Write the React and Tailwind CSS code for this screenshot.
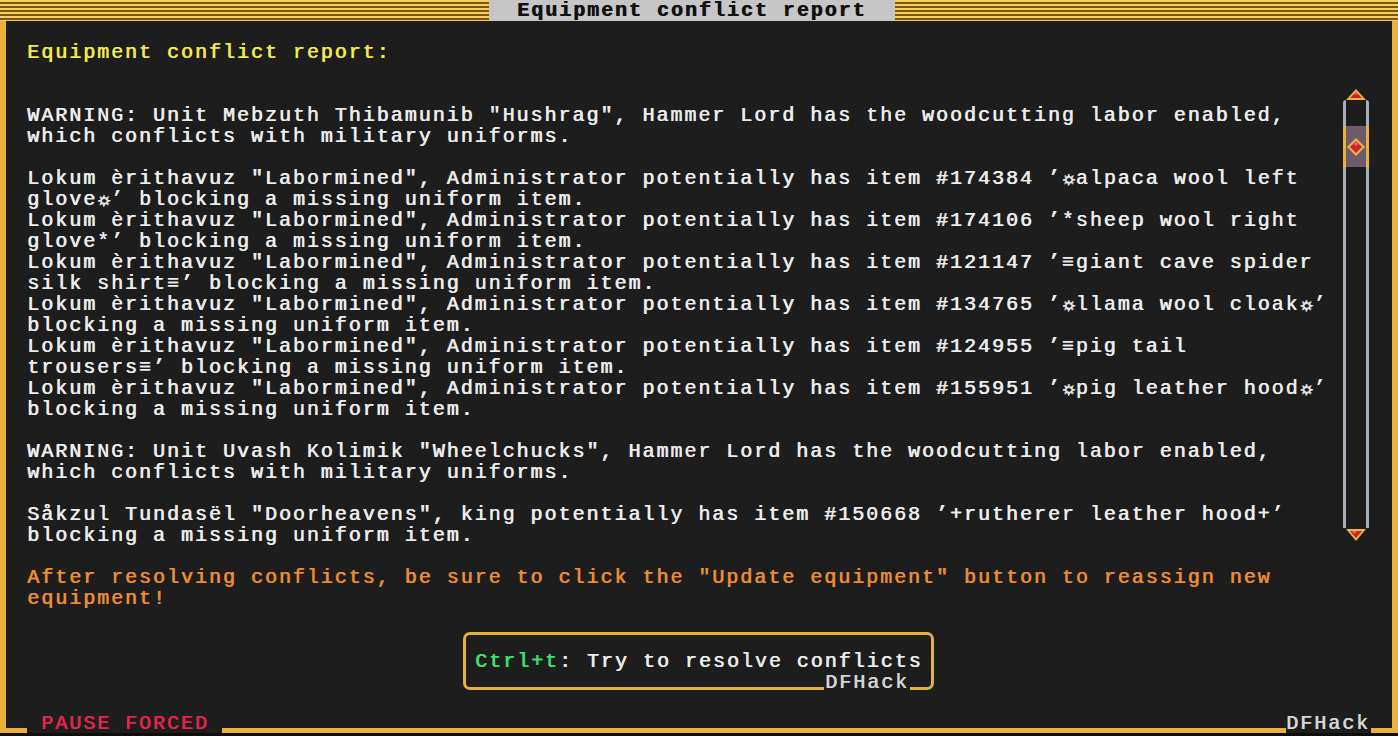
import React from "react";

const stripes =
  "bg-[repeating-linear-gradient(to_bottom,#f7cf5c_0px,#f7cf5c_2px,#7a5418_2px,#7a5418_4px)]";

const listRows = [
  "",
  'WARNING: Unit Mebzuth Thibamunib "Hushrag", Hammer Lord has the woodcutting labor enabled,',
  "which conflicts with military uniforms.",
  "",
  'Lokum èrithavuz "Labormined", Administrator potentially has item #174384 ’☼alpaca wool left',
  "glove☼’ blocking a missing uniform item.",
  'Lokum èrithavuz "Labormined", Administrator potentially has item #174106 ’*sheep wool right',
  "glove*’ blocking a missing uniform item.",
  'Lokum èrithavuz "Labormined", Administrator potentially has item #121147 ’≡giant cave spider',
  "silk shirt≡’ blocking a missing uniform item.",
  'Lokum èrithavuz "Labormined", Administrator potentially has item #134765 ’☼llama wool cloak☼’',
  "blocking a missing uniform item.",
  'Lokum èrithavuz "Labormined", Administrator potentially has item #124955 ’≡pig tail',
  "trousers≡’ blocking a missing uniform item.",
  'Lokum èrithavuz "Labormined", Administrator potentially has item #155951 ’☼pig leather hood☼’',
  "blocking a missing uniform item.",
  "",
  'WARNING: Unit Uvash Kolimik "Wheelchucks", Hammer Lord has the woodcutting labor enabled,',
  "which conflicts with military uniforms.",
  "",
  'Såkzul Tundasël "Doorheavens", king potentially has item #150668 ’+rutherer leather hood+’',
  "blocking a missing uniform item.",
];

// the quality sun glyph comes from a fallback font, keep it in one 14px cell
function renderLine(line) {
  const parts = line.split("☼");
  return parts.map((part, i) => (
    <React.Fragment key={i}>
      {part}
      {i < parts.length - 1 && (
        <span className="inline-block w-[14px] text-center tracking-normal [text-shadow:0.8px_0_0_currentColor,0_0.6px_0_currentColor]">
          ☼
        </span>
      )}
    </React.Fragment>
  ));
}

function Row({ children, className = "" }) {
  return (
    <div className={`h-[21px] leading-[21px] whitespace-pre ${className}`}>
      {children}
    </div>
  );
}

function Scrollbar() {
  return (
    <div className="w-[26px] mr-[23px] pt-[5px] flex flex-col items-center">
      <svg width="20" height="11" viewBox="0 0 20 11">
        <polygon points="10,0 20,11 0,11" fill="#e9b43c" />
        <polygon points="10,3 16,9 4,9" fill="#c8202e" />
        <polygon points="10,3 12,5.5 8,5.5" fill="#f06070" />
      </svg>
      <div className="w-[26px] h-[428px] border-x-[3px] border-[#a7afb8] rounded-t-[3px]">
        <div className="mt-[26px] -mx-[3px] h-[41px] bg-[#6d5a6c] border-x-[3px] border-[#e7b23a] flex items-center justify-center">
          <svg width="18" height="18" viewBox="0 0 18 18">
            <polygon points="9,0 18,9 9,18 0,9" fill="#ecb63c" />
            <polygon points="9,3 15,9 9,15 3,9" fill="#cf2231" />
            <polygon points="9,4 11,6 9,8 7,6" fill="#f26b78" />
          </svg>
        </div>
      </div>
      <svg width="20" height="12" viewBox="0 0 20 12" className="mt-[1px]">
        <polygon points="0,0 20,0 10,12" fill="#e9b43c" />
        <polygon points="4,2 16,2 10,9" fill="#c8202e" />
        <polygon points="6,2 11,2 8.5,5" fill="#f06070" />
      </svg>
    </div>
  );
}

export default function App() {
  return (
    <div className="w-[1398px] h-[736px] bg-[#0e0e0e] flex flex-col overflow-hidden font-['Liberation_Mono','DejaVu_Sans_Mono',monospace] text-[20px] tracking-[1.98px] text-[#ececec] [text-shadow:0.7px_0_0_currentColor]">
      {/* title bar */}
      <div className="h-[21px] flex shrink-0">
        <div className={`w-[489px] ${stripes}`} />
        <div className="w-[406px] bg-[#c6c6c6] text-[#111111] font-bold pl-[28px] leading-[21px] whitespace-pre">
          Equipment conflict report
        </div>
        <div className={`flex-1 ${stripes}`} />
      </div>

      <div className="h-[712px] shrink-0 flex flex-col border-x-[6px] border-[#eab23a] bg-[#1d1d1d]">
        <div className="h-[21px]" />
        <Row className="pl-[21px] text-[#f3ea4a]">Equipment conflict report:</Row>
        <div className="h-[21px]" />

        <div className="flex h-[462px]">
          <div className="flex-1 pl-[21px]">
            {listRows.map((line, i) => (
              <Row key={i}>{renderLine(line)}</Row>
            ))}
          </div>
          <Scrollbar />
        </div>

        <div className="h-[21px]" />
        <Row className="pl-[21px] text-[#ec8b2f]">
          After resolving conflicts, be sure to click the "Update equipment" button to reassign new
        </Row>
        <Row className="pl-[21px] text-[#ec8b2f]">equipment!</Row>
        <div className="h-[21px]" />

        {/* action button */}
        <div className="h-[63px] pl-[457px] pt-[2px]">
          <div className="relative w-[471px] h-[58px] border-[3px] border-[#e3b045] rounded-[7px] pl-[9px] pt-[16px]">
            <Row>
              <span className="text-[#3be36b]">Ctrl+t</span>: Try to resolve conflicts
            </Row>
            <div className="absolute left-[358px] top-[37px] h-[21px] leading-[21px] bg-[#1d1d1d] text-[#d4d4d4] px-[1px]">
              DFHack
            </div>
          </div>
        </div>

        <div className="h-[21px]" />

        {/* bottom border with labels */}
        <div className="h-[19px] flex items-end">
          <div className="w-[21px] h-[5px] bg-[#eab23a]" />
          <div className="w-[195px] h-[19px] pl-[14px] leading-[19px] text-[#e2264c] whitespace-pre">
            PAUSE FORCED
          </div>
          <div className="flex-1 h-[5px] bg-[#eab23a]" />
          <div className="w-[85px] h-[19px] leading-[19px] text-[#d6d6d6]">DFHack</div>
          <div className="w-[21px] h-[5px] bg-[#eab23a]" />
        </div>
      </div>

      <div className="h-[3px] bg-[#0e0e0e]" />
    </div>
  );
}
